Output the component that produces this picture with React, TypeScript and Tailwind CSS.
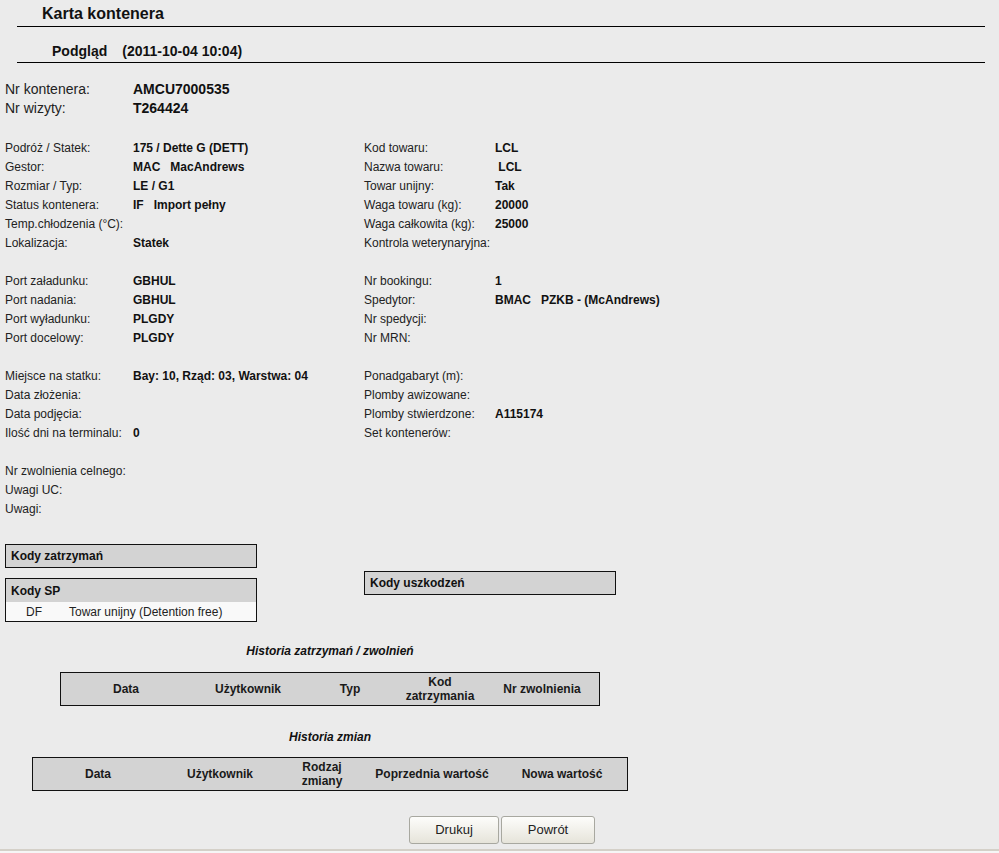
import React from "react";

type Pair = [string, string];

const F = { fontFamily: '"Liberation Sans", Arial, sans-serif' };

function Col({ rows, labelW }: { rows: Pair[]; labelW: string }) {
  return (
    <div className="flex flex-col">
      {rows.map(([l, v], i) => (
        <div key={i} className="flex h-[19px] items-center text-[12px] leading-[19px]">
          <div className={`${labelW} shrink-0 text-[#222]`}>{l}</div>
          <div className="font-bold text-[#111] whitespace-pre">{v}</div>
        </div>
      ))}
    </div>
  );
}

function Group({ left, right }: { left: Pair[]; right?: Pair[] }) {
  return (
    <div className="flex">
      <div className="w-[359px] shrink-0">
        <Col rows={left} labelW="w-[128px]" />
      </div>
      {right && <Col rows={right} labelW="w-[131px]" />}
    </div>
  );
}

function Spacer() {
  return <div className="h-[19px]" />;
}

function HistTable({
  cols,
  heads,
  width,
  ml,
}: {
  cols: string;
  heads: string[][];
  width: string;
  ml: string;
}) {
  return (
    <div className={`${width} ${ml} h-[34px] border border-[#111] bg-[#d3d3d3] grid ${cols}`}>
      {heads.map((h, i) => (
        <div
          key={i}
          className="flex flex-col items-center justify-center text-center text-[12px] font-bold leading-[14px] text-[#1a1a1a]"
        >
          {h.map((t, j) => (
            <span key={j}>{t}</span>
          ))}
        </div>
      ))}
    </div>
  );
}

export default function App() {
  return (
    <div style={F} className="relative w-[999px] h-[853px] overflow-hidden bg-[#ebebeb] text-[#222]">
      <div className="h-[26px] pl-[42px] pt-[5px] text-[16px] font-bold leading-[18px] text-[#111]">
        Karta kontenera
      </div>
      <div className="ml-[17px] w-[968px] h-px bg-black" />
      <div className="h-[35px] pl-[52px] pt-[16px] text-[14px] font-bold leading-[16px] text-[#111]">
        Podgląd<span className="ml-[15px]">(2011-10-04 10:04)</span>
      </div>
      <div className="ml-[17px] w-[968px] h-px bg-black" />

      <div className="pl-[5px] pt-[17px]">
        <div className="flex flex-col mb-[2px]">
          <div className="flex h-[19px] items-center text-[14px] leading-[19px]">
            <div className="w-[128px] text-[#222]">Nr kontenera:</div>
            <div className="font-bold text-[#111]">AMCU7000535</div>
          </div>
          <div className="flex h-[19px] items-center text-[14px] leading-[19px]">
            <div className="w-[128px] text-[#222]">Nr wizyty:</div>
            <div className="font-bold text-[#111]">T264424</div>
          </div>
        </div>
        <Spacer />
        <Group
          left={[
            ["Podróż / Statek:", "175 / Dette G (DETT)"],
            ["Gestor:", "MAC   MacAndrews"],
            ["Rozmiar / Typ:", "LE / G1"],
            ["Status kontenera:", "IF   Import pełny"],
            ["Temp.chłodzenia (°C):", ""],
            ["Lokalizacja:", "Statek"],
          ]}
          right={[
            ["Kod towaru:", "LCL"],
            ["Nazwa towaru:", " LCL"],
            ["Towar unijny:", "Tak"],
            ["Waga towaru (kg):", "20000"],
            ["Waga całkowita (kg):", "25000"],
            ["Kontrola weterynaryjna:", ""],
          ]}
        />
        <Spacer />
        <Group
          left={[
            ["Port załadunku:", "GBHUL"],
            ["Port nadania:", "GBHUL"],
            ["Port wyładunku:", "PLGDY"],
            ["Port docelowy:", "PLGDY"],
          ]}
          right={[
            ["Nr bookingu:", "1"],
            ["Spedytor:", "BMAC   PZKB - (McAndrews)"],
            ["Nr spedycji:", ""],
            ["Nr MRN:", ""],
          ]}
        />
        <Spacer />
        <Group
          left={[
            ["Miejsce na statku:", "Bay: 10, Rząd: 03, Warstwa: 04"],
            ["Data złożenia:", ""],
            ["Data podjęcia:", ""],
            ["Ilość dni na terminalu:", "0"],
          ]}
          right={[
            ["Ponadgabaryt (m):", ""],
            ["Plomby awizowane:", ""],
            ["Plomby stwierdzone:", "A115174"],
            ["Set kontenerów:", ""],
          ]}
        />
        <Spacer />
        <Group
          left={[
            ["Nr zwolnienia celnego:", ""],
            ["Uwagi UC:", ""],
            ["Uwagi:", ""],
          ]}
        />

        <div className="mt-[25px] flex items-center">
          <div className="w-[252px] shrink-0 flex flex-col gap-[10px]">
            <div className="h-[24px] border border-[#111] bg-[#d3d3d3] pl-[5px] flex items-center text-[12px] font-bold text-[#111]">
              Kody zatrzymań
            </div>
            <div className="border border-[#111]">
              <div className="h-[23px] bg-[#d3d3d3] pl-[5px] flex items-center text-[12px] font-bold text-[#111]">
                Kody SP
              </div>
              <div className="h-[19px] bg-[#f9f9f9] flex items-center text-[12px] text-[#222]">
                <span className="w-[63px] pl-[20px] shrink-0">DF</span>
                <span>Towar unijny (Detention free)</span>
              </div>
            </div>
          </div>
          <div className="ml-[107px] w-[252px] h-[24px] border border-[#111] bg-[#d3d3d3] pl-[5px] flex items-center text-[12px] font-bold text-[#111]">
            Kody uszkodzeń
          </div>
        </div>
      </div>

      <div className="mt-[22px] ml-[60px] w-[540px] text-center text-[12px] font-bold italic leading-[14px] text-[#111]">
        Historia zatrzymań / zwolnień
      </div>
      <div className="mt-[14px]">
        <HistTable
          width="w-[540px]"
          ml="ml-[60px]"
          cols="grid-cols-[130px_114px_90px_90px_1fr]"
          heads={[["Data"], ["Użytkownik"], ["Typ"], ["Kod", "zatrzymania"], ["Nr zwolnienia"]]}
        />
      </div>

      <div className="mt-[24px] ml-[32px] w-[596px] text-center text-[12px] font-bold italic leading-[14px] text-[#111]">
        Historia zmian
      </div>
      <div className="mt-[13px]">
        <HistTable
          width="w-[596px]"
          ml="ml-[32px]"
          cols="grid-cols-[130px_114px_90px_130px_1fr]"
          heads={[["Data"], ["Użytkownik"], ["Rodzaj", "zmiany"], ["Poprzednia wartość"], ["Nowa wartość"]]}
        />
      </div>

      <div className="mt-[25px] ml-[409px] flex gap-[2px]">
        <button className="w-[90px] h-[28px] rounded-[3px] border border-[#a8a8a0] bg-gradient-to-b from-[#fdfdfb] to-[#e6e4da] text-[13px] text-[#222]">
          Drukuj
        </button>
        <button className="w-[94px] h-[28px] rounded-[3px] border border-[#a8a8a0] bg-gradient-to-b from-[#fdfdfb] to-[#e6e4da] text-[13px] text-[#222]">
          Powrót
        </button>
      </div>
      <div className="mt-[5px] h-[2px] bg-[#d4d0c8]" />
      <div className="h-[2px] bg-[#f6f6f6]" />
    </div>
  );
}
